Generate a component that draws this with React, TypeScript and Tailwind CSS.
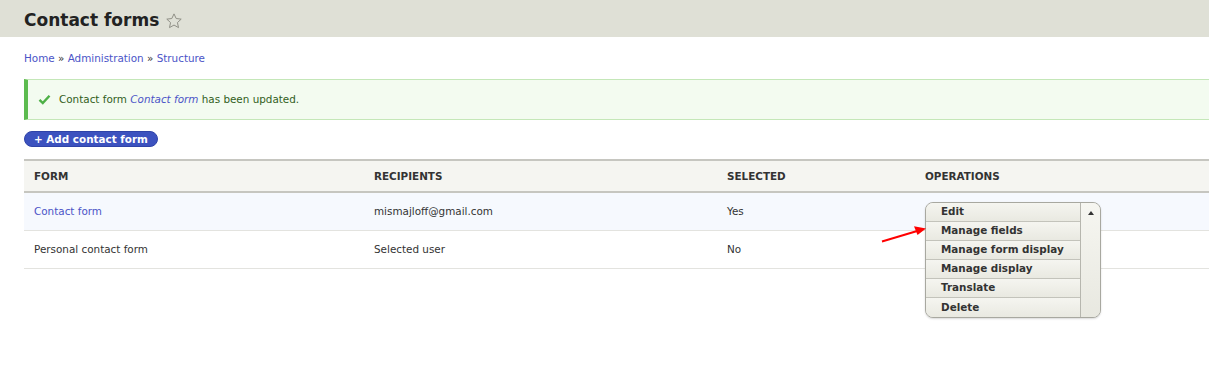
import React from "react";

const font = { fontFamily: '"DejaVu Sans", Verdana, sans-serif' };

function Star() {
  return (
    <svg width="18" height="18" viewBox="0 0 24 24" className="ml-[6px] mt-[1px]">
      <path
        d="M12 2.5l2.9 6.2 6.7.8-5 4.6 1.4 6.7L12 17.4l-6 3.4 1.4-6.7-5-4.6 6.7-.8z"
        fill="none"
        stroke="#8d8d84"
        strokeWidth="1.3"
        strokeLinejoin="round"
      />
    </svg>
  );
}

function Check() {
  return (
    <svg width="13" height="11" viewBox="0 0 13 11">
      <path d="M1.5 5.8l3.3 3.3 6.7-7.3" fill="none" stroke="#4db046" strokeWidth="2.4" />
    </svg>
  );
}

const ops = ["Edit", "Manage fields", "Manage form display", "Manage display", "Translate", "Delete"];

export default function App() {
  return (
    <div className="relative w-[1209px] h-[366px] bg-white overflow-hidden text-[#333]" style={font}>
      <div className="h-[37px] bg-[#dfe0d6] flex items-center pl-6 pt-[3px]">
        <h1 className="text-[17px] font-bold text-[#222] leading-none">Contact forms</h1>
        <Star />
      </div>
      <div className="pl-6 pt-[14px] text-[10.4px] leading-[14px] text-[#4b54c7]">
        <span>Home</span>
        <span className="text-[#333]"> » </span>
        <span>Administration</span>
        <span className="text-[#333]"> » </span>
        <span>Structure</span>
      </div>
      <div className="ml-6 mt-[14px] h-[41px] bg-[#f3fbf0] border-y border-[#c4e7b8] border-l-[4px] border-l-[#5cbb4f] flex items-center pl-[10px] text-[10.4px] text-[#325e1c]">
        <Check />
        <span className="ml-[8px]">
          Contact form <span className="italic text-[#4b54c7]">Contact form</span> has been updated.
        </span>
      </div>
      <div className="pl-6 mt-[11px] flex">
        <span className="flex items-center h-[16px] px-[9px] rounded-full bg-[#3c52bf] border border-[#2f43a8] text-white font-bold text-[10.4px] leading-none">
          + Add contact form
        </span>
      </div>
      <div className="ml-6 mt-[12px] text-[10.4px]">
        <div className="grid grid-cols-[340px_353px_198px_1fr] h-[34px] pt-[1px] bg-[#f5f5f1] border-t-2 border-b-2 border-[#c6c6c0] items-center font-bold uppercase text-[#333]">
          <div className="pl-[10px]">Form</div>
          <div className="pl-[10px]">Recipients</div>
          <div className="pl-[10px]">Selected</div>
          <div className="pl-[10px]">Operations</div>
        </div>
        <div className="grid grid-cols-[340px_353px_198px_1fr] h-[38px] bg-[#f6f9fe] border-b border-[#e3e3df] items-center">
          <div className="pl-[10px] text-[#4b54c7]">Contact form</div>
          <div className="pl-[10px]">mismajloff@gmail.com</div>
          <div className="pl-[10px]">Yes</div>
          <div className="pl-[10px] relative self-stretch">
            <div className="absolute left-[10px] top-[9px] w-[176px] rounded-[8px] border border-[#a8a8a0] bg-[#eeeee7] flex overflow-hidden z-10 shadow-[0_1px_2px_rgba(0,0,0,0.15)]">
              <div className="w-[154px] flex flex-col">
                {ops.map((o, i) => (
                  <div
                    key={o}
                    className={
                      "h-[19px] flex items-center pl-[15px] font-bold text-[#333] bg-[linear-gradient(#f5f5f0,#e9e9e1)] " +
                      (i < ops.length - 1 ? "border-b border-[#c3c3bb]" : "")
                    }
                  >
                    {o}
                  </div>
                ))}
              </div>
              <div className="flex-1 border-l border-[#b6b6ae] bg-[linear-gradient(#f6f6f1,#e8e8e0)] flex justify-center pt-[8px]">
                <svg width="6" height="4" viewBox="0 0 6 4">
                  <path d="M0 4L3 0L6 4Z" fill="#333" />
                </svg>
              </div>
            </div>
          </div>
        </div>
        <div className="grid grid-cols-[340px_353px_198px_1fr] h-[38px] bg-white border-b border-[#e3e3df] items-center">
          <div className="pl-[10px]">Personal contact form</div>
          <div className="pl-[10px]">Selected user</div>
          <div className="pl-[10px]">No</div>
          <div className="pl-[10px]"></div>
        </div>
      </div>
      <svg className="absolute left-[878px] top-[224px] z-20" width="52" height="22" viewBox="0 0 52 22">
        <path d="M4 17.5L40 6.8" stroke="#f00" strokeWidth="2" />
        <path d="M48 4.5L36 2.2L39.5 11Z" fill="#f00" />
      </svg>
    </div>
  );
}
